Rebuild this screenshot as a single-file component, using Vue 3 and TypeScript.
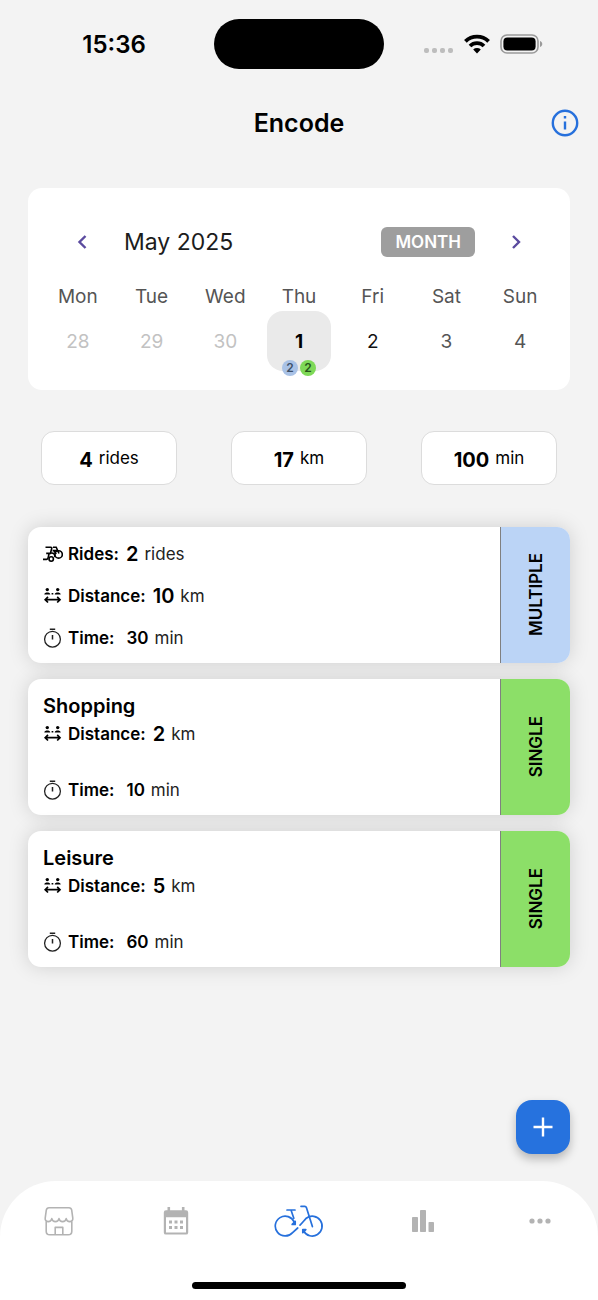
<script setup lang="ts">
import { ref } from 'vue'

interface Day {
  name: string
  date: number
  tone: 'past' | 'today' | 'strong' | 'plain'
}

interface Ride {
  id: number
  kind: 'MULTIPLE' | 'SINGLE'
  title?: string
  rides?: number
  distance: number
  time: number
}

const days: Day[] = [
  { name: 'Mon', date: 28, tone: 'past' },
  { name: 'Tue', date: 29, tone: 'past' },
  { name: 'Wed', date: 30, tone: 'past' },
  { name: 'Thu', date: 1, tone: 'today' },
  { name: 'Fri', date: 2, tone: 'strong' },
  { name: 'Sat', date: 3, tone: 'plain' },
  { name: 'Sun', date: 4, tone: 'plain' },
]

const stats = [
  { value: 4, unit: 'rides' },
  { value: 17, unit: 'km' },
  { value: 100, unit: 'min' },
]

const rides: Ride[] = [
  { id: 1, kind: 'MULTIPLE', rides: 2, distance: 10, time: 30 },
  { id: 2, kind: 'SINGLE', title: 'Shopping', distance: 2, time: 10 },
  { id: 3, kind: 'SINGLE', title: 'Leisure', distance: 5, time: 60 },
]

const selected = ref(1)
</script>

<template>
  <div class="screen">
    <div class="status">
      <span class="clock">15:36</span>
      <span class="island"></span>
      <span class="signals">
        <svg width="30" height="20" viewBox="0 0 30 20" fill="#bdbdbd" aria-hidden="true">
          <rect x="0" y="14" width="5" height="5" rx="2" />
          <rect x="8" y="14" width="5" height="5" rx="2" />
          <rect x="16" y="14" width="5" height="5" rx="2" />
          <rect x="24" y="14" width="5" height="5" rx="2" />
        </svg>
        <svg width="26" height="20" viewBox="0 0 26 20" fill="none" stroke="#000" stroke-width="3.8" aria-hidden="true">
          <path d="M1.4 7.4a16.5 16.5 0 0 1 23.2 0" />
          <path d="M6 12a10 10 0 0 1 14 0" />
          <path d="M13 19.4l-3.8-3.8a5.6 5.6 0 0 1 7.6 0z" fill="#000" stroke="none" />
        </svg>
        <svg width="43" height="20" viewBox="0 0 43 20" aria-hidden="true">
          <rect x="1" y="1" width="37" height="18" rx="6" fill="none" stroke="#9a9a9a" stroke-width="1.6" />
          <rect x="3.4" y="3.4" width="32.2" height="13.2" rx="4" />
          <path d="M40 7c3 1 3 5 0 6z" fill="#9a9a9a" />
        </svg>
      </span>
    </div>

    <header class="header">
      <h1>Encode</h1>
      <button class="info" type="button" aria-label="Information">
        <svg width="28" height="28" viewBox="0 0 28 28" fill="none" stroke="#2670dc" aria-hidden="true">
          <circle cx="14" cy="14" r="12.2" stroke-width="2.4" />
          <path d="M14 12.6v8M14 7v2.6" stroke-width="2.4" />
        </svg>
      </button>
    </header>

    <main class="content">
      <section class="calendar">
        <div class="cal-head">
          <button class="arrow" type="button" aria-label="Previous week">
            <svg width="24" height="24" viewBox="0 0 24 24" fill="none" stroke="#5b4b9f" stroke-width="2.4" aria-hidden="true">
              <path d="M15.5 6l-6 6 6 6" />
            </svg>
          </button>
          <h2>May 2025</h2>
          <button class="month" type="button">MONTH</button>
          <button class="arrow" type="button" aria-label="Next week">
            <svg width="24" height="24" viewBox="0 0 24 24" fill="none" stroke="#5b4b9f" stroke-width="2.4" aria-hidden="true">
              <path d="M9 6l6 6-6 6" />
            </svg>
          </button>
        </div>
        <div class="week">
          <div v-for="d in days" :key="d.name" class="day">
            <span class="weekday">{{ d.name }}</span>
            <button
              type="button"
              class="date"
              :class="[d.tone, { selected: d.date === selected }]"
              @click="selected = d.date"
            >
              {{ d.date }}
              <span v-if="d.tone === 'today'" class="badges">
                <span class="badge blue">2</span>
                <span class="badge green">2</span>
              </span>
            </button>
          </div>
        </div>
      </section>

      <section class="stats">
        <div v-for="s in stats" :key="s.unit" class="stat">
          <strong>{{ s.value }}</strong>
          <span>{{ s.unit }}</span>
        </div>
      </section>

      <section class="rides">
        <article v-for="r in rides" :key="r.id" class="ride">
          <div class="ride-body">
            <div v-if="r.title" class="top">
              <h3>{{ r.title }}</h3>
              <p class="row">
                <svg width="20" height="20" viewBox="0 0 20 20" aria-hidden="true">
                  <circle cx="4.3" cy="3.6" r="1.7" />
                  <circle cx="14.7" cy="3.6" r="1.7" />
                  <path d="M1.3 8.400c.2-2.400 5.800-2.400 6 0zM11.700 8.400c.2-2.400 5.800-2.400 6 0zM8.600 7h1.700v1.400H8.600z" />
                  <path d="M2.400 13.700h14.400M5 10.900l-2.800 2.800L5 16.500M14.200 10.900l2.800 2.800-2.800 2.800" fill="none" stroke="#000" stroke-width="1.700" />
                </svg>
                <b>Distance:</b>
                <b class="big">{{ r.distance }}</b>
                <span>km</span>
              </p>
            </div>
            <template v-else>
              <p class="row">
                <svg width="20" height="20" viewBox="0 0 20 20" fill="none" stroke="#000" stroke-width="1.6" aria-hidden="true">
                  <path d="M2.500 3.200h5.200c1 0 1.200.5 1 1.300L7.400 9.400H3.200M0 15.400h3.600c1 0 1.300-.8 1.600-2l.8-3.400" />
                  <path d="M7.200 9.200c3.400-.8 4.600.6 4.800 4" />
                  <path d="M10 3.200h3.200l2.800 6.300M9.600 6.600h4.800M11 6.600l2.200 3.600" />
                  <circle cx="15.600" cy="10.400" r="3.700" />
                  <circle cx="8.200" cy="15" r="2.200" />
                </svg>
                <b>Rides:</b>
                <b class="big">{{ r.rides }}</b>
                <span>rides</span>
              </p>
              <p class="row">
                <svg width="20" height="20" viewBox="0 0 20 20" aria-hidden="true">
                  <circle cx="4.3" cy="3.6" r="1.7" />
                  <circle cx="14.7" cy="3.6" r="1.7" />
                  <path d="M1.3 8.400c.2-2.400 5.800-2.400 6 0zM11.700 8.400c.2-2.400 5.800-2.400 6 0zM8.600 7h1.700v1.400H8.600z" />
                  <path d="M2.400 13.700h14.400M5 10.900l-2.800 2.800L5 16.500M14.200 10.900l2.800 2.800-2.800 2.800" fill="none" stroke="#000" stroke-width="1.700" />
                </svg>
                <b>Distance:</b>
                <b class="big">{{ r.distance }}</b>
                <span>km</span>
              </p>
            </template>
            <p class="row time">
              <svg width="20" height="20" viewBox="0 0 20 20" fill="none" stroke="#222" stroke-width="1.3" aria-hidden="true">
                <circle cx="9.5" cy="11.2" r="7.9" />
                <path d="M6.8 1.2h5.4M9.5 7v4.6" stroke-width="1.5" />
              </svg>
              <b>Time:</b>
              <b class="minutes">{{ r.time }}</b>
              <span>min</span>
            </p>
          </div>
          <div class="kind" :class="r.kind.toLowerCase()">
            <span>{{ r.kind }}</span>
          </div>
        </article>
      </section>

      <button class="fab" type="button" aria-label="Add ride">
        <svg width="24" height="24" viewBox="0 0 24 24" fill="none" stroke="#fff" stroke-width="2.4" aria-hidden="true">
          <path d="M12 2.5v19M2.5 12h19" />
        </svg>
      </button>
    </main>

    <footer class="footer">
      <nav class="tabs" aria-label="Main">
        <a href="#shop" aria-label="Shop">
          <svg width="30" height="30" viewBox="0 0 30 30" fill="none" stroke="#b3b3b3" stroke-width="1.6" stroke-linejoin="round" aria-hidden="true">
            <path d="M5 1.8h20c1.6 0 2.4.8 2.7 2.4l1.1 8c.3 2-1 3.4-3 3.4-1.9 0-3.3-1.2-3.6-3-.4 1.8-1.8 3-3.6 3s-3.2-1.2-3.600-3c-.4 1.800-1.800 3-3.600 3s-3.200-1.200-3.600-3c-.4 1.800-1.700 3-3.600 3-2 0-3.300-1.400-3-3.400l1.100-8C2.600 2.600 3.400 1.800 5 1.800z" />
            <path d="M2.200 15.400v9.800c0 2.400 1.200 3.600 3.600 3.600h18.400c2.400 0 3.600-1.200 3.600-3.600v-9.800" />
            <path d="M11.200 28.600v-7.200h7.600v7.200" />
          </svg>
        </a>
        <a href="#calendar" aria-label="Calendar">
          <svg width="26" height="30" viewBox="0 0 26 30" aria-hidden="true">
            <path fill="#b3b3b3" fill-rule="evenodd" d="M4.500 1h2.600v3.200h11.800V1h2.600v3.200H23a2.200 2.200 0 0 1 2.200 2.200v20a2.200 2.200 0 0 1-2.200 2.200H3a2.200 2.200 0 0 1-2.200-2.200v-20A2.200 2.200 0 0 1 3 4.200h1.500zM3 11.200v15.200h20V11.200z" />
            <path fill="#b3b3b3" d="M6 14.500h3v3H6zM11.500 14.500h3v3h-3zM17 14.500h3v3h-3zM6 20h3v3H6zM11.500 20h3v3h-3zM17 20h3v3h-3z" />
          </svg>
        </a>
        <a href="#encode" aria-label="Encode" aria-current="page">
          <svg width="50" height="34" viewBox="0 0 50 34" fill="none" stroke="#2670dc" stroke-width="1.7" stroke-linecap="round" stroke-linejoin="round" aria-hidden="true">
            <path d="M20.300 18.200A9.900 9.900 0 1 0 18.600 28.600L23.700 24" />
            <path d="M26 21.200C28.500 18.700 30.300 16.300 32.300 14.200A9.900 9.900 0 1 1 29.600 27" />
            <path d="M13 6h8M17 6l2.800 8.200M27 2.300h3.800c.9 0 1.300.4 1.600 1.300l6 19" />
            <path d="M21.200 17.400v3h-3zM28.800 28.600v-3h3z" fill="#2670dc" />
          </svg>
        </a>
        <a href="#statistics" aria-label="Statistics">
          <svg width="22" height="24" viewBox="0 0 22 24" fill="#b3b3b3" aria-hidden="true">
            <rect x="0" y="8" width="6" height="15" rx=".8" />
            <rect x="8" y="1" width="6" height="22" rx=".8" />
            <rect x="16.500" y="13" width="5.500" height="10" rx=".8" />
          </svg>
        </a>
        <a href="#more" aria-label="More">
          <svg width="22" height="8" viewBox="0 0 22 8" fill="#b3b3b3" aria-hidden="true">
            <circle cx="3" cy="4" r="2.600" />
            <circle cx="11" cy="4" r="2.600" />
            <circle cx="19" cy="4" r="2.600" />
          </svg>
        </a>
      </nav>
      <div class="home-bar"></div>
    </footer>
  </div>
</template>

<style>
body {
  background: #f3f3f3;
}
</style>

<style scoped>
.screen {
  display: flex;
  flex-direction: column;
  min-height: 100vh;
  background: #f3f3f3;
  color: #000;
  font-family: Inter, 'Liberation Sans', sans-serif;
}

h1,
h2,
h3,
p {
  margin: 0;
}

button {
  padding: 0;
  border: 0;
  background: none;
  color: inherit;
  font: inherit;
  cursor: pointer;
}

svg {
  display: block;
  flex: none;
}

.status {
  display: grid;
  grid-template-columns: 1fr 170px 1fr;
  align-items: center;
  padding-top: 19px;
}

.clock {
  padding: 2px 0 0 14px;
  font-size: 24px;
  font-weight: 600;
  line-height: 28px;
  text-align: center;
}

.island {
  height: 50px;
  border-radius: 25px;
  background: #000;
}

.signals {
  display: flex;
  gap: 10px;
  padding-left: 40px;
}

.header {
  display: grid;
  grid-template-columns: 1fr auto 1fr;
  align-items: center;
  padding: 38px 19px 0;
}

.header h1 {
  grid-column: 2;
  font-size: 25px;
  font-weight: 600;
  line-height: 32px;
}

.info {
  justify-self: end;
}

.content {
  display: flex;
  flex: 1;
  flex-direction: column;
  padding: 49px 28px 27px;
}

.calendar {
  padding: 36px 13px 19px;
  border-radius: 14px;
  background: #fff;
}

.cal-head {
  display: flex;
  align-items: center;
  height: 36px;
  padding: 0 29px;
}

.cal-head h2 {
  flex: 1;
  margin-left: 30px;
  color: #1c1c1c;
  font-size: 23px;
  font-weight: 400;
}

.month {
  margin-right: 29px;
  padding: 0 14px;
  border-radius: 6px;
  background: #9e9e9e;
  color: #fff;
  font-size: 17px;
  font-weight: 600;
  line-height: 30px;
}

.week {
  display: grid;
  grid-template-columns: repeat(7, 1fr);
  margin-top: 23px;
}

.day {
  display: flex;
  flex-direction: column;
  align-items: center;
}

.weekday {
  color: #555;
  font-size: 19px;
  line-height: 28px;
}

.date {
  position: relative;
  width: 64px;
  height: 60px;
  border-radius: 16px;
  color: #555;
  font-size: 19px;
}

.date.past {
  color: #c2c2c2;
}

.date.strong {
  color: #111;
}

.date.today {
  color: #000;
  font-weight: 700;
}

.date.selected {
  background: #eaeaea;
}

.badges {
  position: absolute;
  right: 0;
  bottom: -5px;
  left: 0;
  display: flex;
  justify-content: center;
  gap: 2px;
}

.badge {
  width: 16px;
  border-radius: 50%;
  color: #3d5068;
  font-size: 12px;
  font-weight: 600;
  line-height: 16px;
}

.badge.blue {
  background: #a9c2e6;
}

.badge.green {
  background: #7ed957;
  color: #24551a;
}

.stats {
  display: flex;
  justify-content: space-between;
  margin-top: 41px;
  padding: 0 13px;
}

.stat {
  display: flex;
  align-items: center;
  justify-content: center;
  gap: 6px;
  box-sizing: border-box;
  width: 136px;
  height: 54px;
  padding-top: 3px;
  border: 1px solid #dcdcdc;
  border-radius: 13px;
  background: #fff;
}

.stat strong {
  font-size: 20px;
  font-weight: 700;
}

.stat span {
  padding-bottom: 4px;
  font-size: 17px;
}

.rides {
  display: flex;
  flex-direction: column;
  gap: 16px;
  margin-top: 42px;
}

.ride {
  display: flex;
  min-height: 136px;
  border-radius: 13px;
  background: #fff;
  box-shadow: 0 0 20px rgba(0, 0, 0, 0.15);
}

.ride-body {
  display: flex;
  flex: 1;
  flex-direction: column;
  justify-content: space-between;
  padding: 15px 15px 13px;
}

.top {
  display: flex;
  flex-direction: column;
  gap: 4px;
}

.top h3 {
  font-size: 20px;
  font-weight: 600;
  line-height: 24px;
}

.row {
  display: flex;
  align-items: center;
  height: 24px;
  font-size: 17px;
}

.row b {
  margin-left: 5px;
  font-weight: 600;
}

.row .big {
  margin-left: 7px;
  font-size: 20px;
}

.row .minutes {
  margin-left: 12px;
}

.row span {
  margin-left: 6px;
  color: #222;
}

.kind {
  display: flex;
  align-items: center;
  justify-content: center;
  width: 69px;
  border-left: 1px solid #808080;
  border-radius: 0 13px 13px 0;
  font-size: 17px;
  font-weight: 600;
}

.kind span {
  transform: rotate(180deg);
  writing-mode: vertical-rl;
}

.kind.multiple {
  background: #bbd4f6;
}

.kind.single {
  background: #8cdf68;
}

.fab {
  display: grid;
  place-items: center;
  align-self: flex-end;
  width: 54px;
  height: 54px;
  margin-top: auto;
  border-radius: 16px;
  background: #2672de;
  box-shadow: 0 5px 10px rgba(0, 0, 0, 0.25);
}

.footer {
  padding-bottom: 11px;
  border-radius: 56px 56px 0 0;
  background: #fff;
}

.tabs {
  display: grid;
  grid-template-columns: 9fr 9fr 10fr 9fr 9fr;
  height: 80px;
}

.tabs a {
  display: grid;
  place-items: center;
}

.home-bar {
  width: 214px;
  height: 7px;
  margin: 21px auto 0;
  border-radius: 4px;
  background: #000;
}
</style>
